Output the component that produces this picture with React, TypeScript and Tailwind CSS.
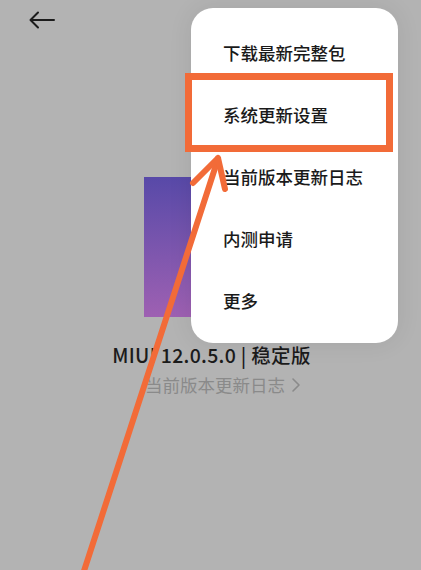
import React from "react";

const MENU_ITEMS = ["下载最新完整包", "系统更新设置", "当前版本更新日志", "内测申请", "更多"];

const CJK = "font-['Noto_Sans_CJK_SC','Noto_Sans',sans-serif]";

function BackArrow() {
  return (
    <svg width="28" height="18" viewBox="0 0 28 18" fill="none">
      <path d="M26 9H3M10 1.5L2.5 9L10 16.5" stroke="#1c1c1c" strokeWidth="2" strokeLinecap="round" strokeLinejoin="round" />
    </svg>
  );
}

function Annotation() {
  return (
    <svg className="absolute inset-0 pointer-events-none" width="421" height="570" viewBox="0 0 421 570">
      {/* 强调框 */}
      <rect x="188.5" y="76.5" width="201" height="72" fill="none" stroke="#f26b38" strokeWidth="7" />
      {/* 箭头 */}
      <path d="M217 162L83 574" stroke="#f26b38" strokeWidth="6" strokeLinecap="round" />
      <path d="M218 158L193 183M218 158L225 189" stroke="#f26b38" strokeWidth="6" strokeLinecap="round" strokeLinejoin="round" />
    </svg>
  );
}

export default function App() {
  return (
    <div className={`relative w-[421px] h-[570px] overflow-hidden bg-[#b3b3b3] ${CJK}`}>
      {/* ヘッダー */}
      <div className="h-[40px] pl-[28px] pt-[11px]">
        <BackArrow />
      </div>

      {/* 版本信息 */}
      <div className="flex flex-col items-center pl-[2px]">
        <div className="mt-[137px] w-[136px] h-[140px] bg-gradient-to-b from-[#5849a8] to-[#9e60b2] blur-[0.5px]" />
        <p className="mt-[24px] text-[19.5px] leading-[28px] font-medium tracking-[0.3px] text-[#1b1b1b]">MIUI 12.0.5.0 | 稳定版</p>
        <p className="mt-[4px] ml-[23px] text-[17.5px] leading-[24px] text-[#8a8a8a] flex items-center gap-[6px]">
          当前版本更新日志
          <svg width="10" height="16" viewBox="0 0 10 16" fill="none">
            <path d="M2 2L8 8L2 14" stroke="#8a8a8a" strokeWidth="1.6" strokeLinecap="round" strokeLinejoin="round" />
          </svg>
        </p>
      </div>

      {/* 弹出菜单 */}
      <div className="absolute left-[191px] top-[8px] w-[207px] h-[335px] rounded-[22px] bg-white pt-[14px] shadow-[0_0_24px_rgba(0,0,0,0.08)]">
        {MENU_ITEMS.map((item) => (
          <div key={item} className="h-[62px] pl-[32px] flex items-center text-[17.5px] font-medium text-[#1a1a1a]">
            {item}
          </div>
        ))}
      </div>

      <Annotation />
    </div>
  );
}
